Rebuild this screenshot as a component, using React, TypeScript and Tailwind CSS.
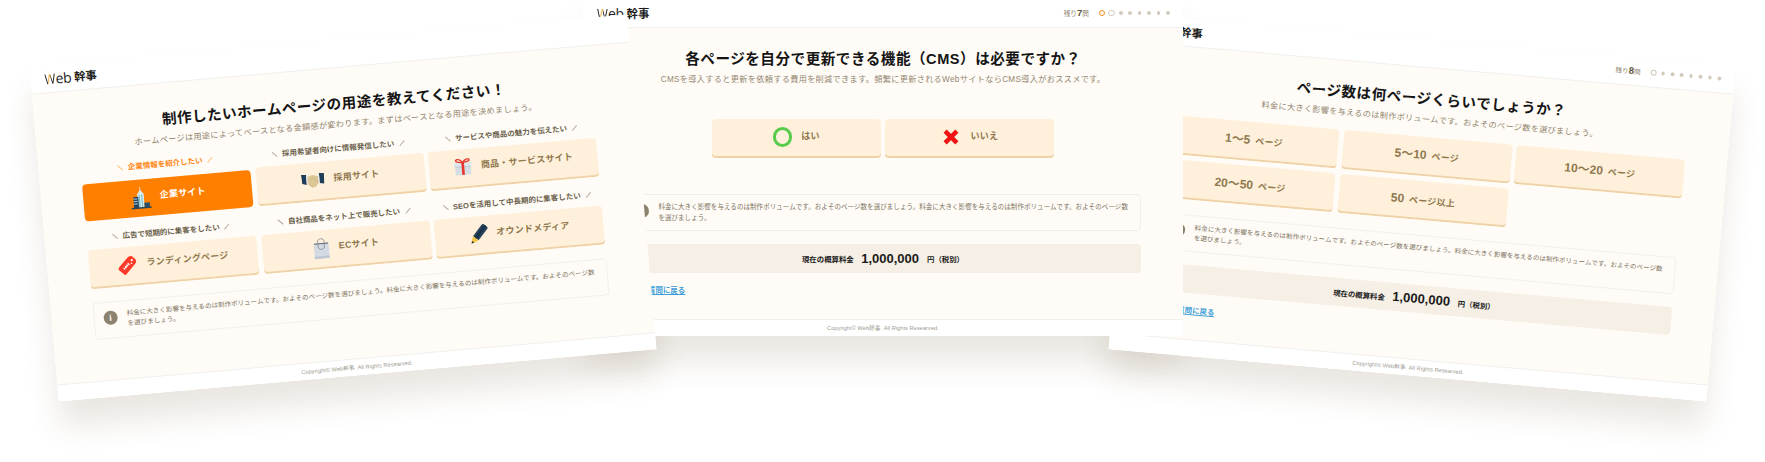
import type { ReactNode } from "react";

const NOTE =
  "料金に大きく影響を与えるのは制作ボリュームです。およそのページ数を選びましょう。料金に大きく影響を与えるのは制作ボリュームです。およそのページ数を選びましょう。";

function Logo() {
  return (
    <div className="mt-[2px] flex items-center text-[#1c1c1c]">
      <div className="flex h-[14px] w-[29.5px] items-center font-['Open_Sans'] text-[14px] font-normal leading-[14px] tracking-[-0.4px]">
        <span className="-mr-[2.4px] inline-block w-[13.4px] origin-left scale-x-[0.84] bg-[linear-gradient(90deg,#1c1c1c_0_30%,#f0a32c_30%_52%,#1c1c1c_52%)] bg-clip-text text-transparent">
          W
        </span>
        <span className="inline-block origin-left">eb</span>
      </div>
      <div className="relative text-[11.4px] font-bold leading-[14px]">
        幹事
        <span className="absolute left-[2px] top-[6px] size-[2px] rounded-full bg-[#f0a32c]" />
      </div>
    </div>
  );
}

function Progress({ left, rings }: { left: number; rings: string[] }) {
  return (
    <div className="flex items-center">
      <div className="mr-[8.5px] flex items-baseline text-[6.6px] leading-[10px] text-[#8f8370]">
        残り<span className="text-[9.5px] font-bold text-[#5c503a]">{left}</span>問
      </div>
      <div className="flex items-center">
        {Array.from({ length: 8 }, (_, i) => (
          <span key={i} className="flex w-[9.4px] justify-center">
            {i < rings.length ? (
              <span className={`size-[6.4px] rounded-full ${rings[i]}`} />
            ) : (
              <span className="size-[3.6px] rounded-full bg-[#d3cabc]" />
            )}
          </span>
        ))}
      </div>
    </div>
  );
}

function Heading({ title, sub, className }: { title: string; sub: string; className: string }) {
  return (
    <div className={`flex flex-col items-center whitespace-nowrap ${className}`}>
      <h1 className="text-[14.6px] font-bold leading-[16px] tracking-[0.5px] text-[#151515]">{title}</h1>
      <p className="mt-[6.5px] text-[8.2px] leading-[12px] tracking-[0.3px] text-[#938670]">{sub}</p>
    </div>
  );
}

function Choice({ icon, children, active = false }: { icon?: ReactNode; children: ReactNode; active?: boolean }) {
  return (
    <button
      className={
        active
          ? "mt-[2px] flex h-[37px] w-[169px] items-center justify-center gap-[9px] rounded-[4px] bg-[#ff8000] text-[9px] font-bold tracking-[0.25px] text-white"
          : "flex h-[39px] w-[169px] items-center justify-center gap-[9px] rounded-[4px] bg-[#fff0db] pb-[2px] text-[9px] font-bold tracking-[0.25px] text-[#8f784e] shadow-[inset_0_-2px_0_#efd3a8]"
      }
    >
      {icon}
      <span className="whitespace-nowrap">{children}</span>
    </button>
  );
}

function Purpose({ label, icon, text, active = false }: { label: string; icon: ReactNode; text: string; active?: boolean }) {
  return (
    <div className="flex flex-col">
      <div className={`mb-[3.5px] flex h-[15.5px] items-center justify-center gap-[7px] whitespace-nowrap text-[7.5px] font-bold leading-[9px] ${active ? "text-[#ff8410]" : "text-[#6a5f4b]"}`}>
        <span className="h-[7px] w-px -rotate-45 bg-current opacity-50" />
        {label}
        <span className="h-[7px] w-px rotate-45 bg-current opacity-50" />
      </div>
      <Choice icon={icon} active={active}>
        {text}
      </Choice>
    </div>
  );
}

function Note() {
  return (
    <div className="flex h-[37px] w-[515.6px] rounded-[4px] border border-[#f3f0ea] pl-[8.7px] pt-[7.5px]">
      <span className="mt-[1px] flex size-[14px] shrink-0 items-center justify-center rounded-full bg-[#8c826e] font-['Liberation_Serif'] text-[9px] font-bold leading-none text-white">
        i
      </span>
      <p className="-mt-[0.5px] ml-[9.5px] w-[474px] text-[6.5px] leading-[10.6px] tracking-[0.06px] text-[#7d725e]">{NOTE}</p>
    </div>
  );
}

function Price() {
  return (
    <>
      <div className="mt-[13.4px] flex h-[28.3px] w-[515.6px] items-center justify-center rounded-[4px] bg-[#f5efe5] text-[#1b1b1b]">
        <span className="mt-[3px] text-[7.4px] font-bold">現在の概算料金</span>
        <span className="ml-[7.5px] text-[13px] font-bold">1,000,000</span>
        <span className="ml-[8px] mt-[3px] text-[7.4px] font-bold">円（税別）</span>
      </div>
      <a className="ml-[8px] mt-[12.3px] self-start text-[7.45px] font-bold leading-[11px] text-[#3f9fd8] underline">前の質問に戻る</a>
    </>
  );
}

function Screen({ place, header, children }: { place: string; header?: ReactNode; children: ReactNode }) {
  return (
    <section className={`absolute flex h-[336px] w-[600px] flex-col overflow-hidden bg-[#fffcf7] ${place}`}>
      <header className="flex h-[27.5px] shrink-0 items-center justify-between border-b border-[#f1efec] bg-white pl-[14px] pr-[10.6px]">
        <Logo />
        {header}
      </header>
      <main className="flex flex-1 flex-col px-[42.2px]">{children}</main>
      <footer className="flex h-[17px] shrink-0 items-center justify-center border-t border-[#f1efec] bg-white text-[5.6px] tracking-[0.07px] text-[#a09a90]">
        Copyright© Web幹事. All Rights Researved.
      </footer>
    </section>
  );
}

const Building = () => (
  <svg viewBox="0 0 21 23" className="h-[23px] w-[21px]">
    <path d="M10.2 0v5" stroke="#e9eef0" strokeWidth=".7" />
    <path d="M7 7.5 10.3 3l3.3 4.500V21H7z" fill="#d9edf0" />
    <path d="M8.500 8h1.200v13H8.500zM11 8h1.200v13H11z" fill="#7fc0cc" />
    <path d="M3 10h5v11H3z" fill="#1f4561" />
    <path d="M3 12h4M3 14.500h4M3 17h4" stroke="#dbe6ea" strokeWidth=".8" />
    <path d="M13.500 16.500H19V21h-5.500z" fill="#2b4f68" />
    <path d="M.5 20.700h20v1.500H.5z" fill="#2d4656" />
  </svg>
);

const Handshake = () => (
  <svg viewBox="0 0 23 18" className="h-[18px] w-[23px]">
    <path d="M0 2.500 5 3v10l-4.500-1.500z" fill="#1e3d59" />
    <path d="M23 2.500 18 2v10l4.500 1z" fill="#1e3d59" />
    <path d="M5 3.500h1.200v9L5 13zM18 3.200h-1.200v9l1.200.3z" fill="#e8edf0" />
    <path d="M6.200 5 11 3.500 16.800 5v7l-3 3.500-3.300.5-4.300-3.500z" fill="#dcc896" />
    <path d="m9 8 3-2 4.500 5M8 13l2.500 2.500" stroke="#c9b27b" strokeWidth=".8" fill="none" />
  </svg>
);

const Gift = () => (
  <svg viewBox="0 0 18 18" className="h-[18px] w-[18px]">
    <path d="M1.200 7h15.600v9.500H1.200z" fill="#d5dde5" />
    <path d="M0 4h18v4H0z" fill="#dfe6ec" />
    <path d="M1.200 8h15.600v.8H1.200z" fill="#bcc7d2" />
    <path d="M7.800 4h2.600v12.500H7.800z" fill="#e8382d" />
    <path d="M9 4C6.500.5 3 .2 2.300 1.500S4.500 4 9 4c4.500 0 7.400-1.200 6.700-2.500S11.500.5 9 4z" fill="none" stroke="#e8382d" strokeWidth="1.300" />
  </svg>
);

const Tag = () => (
  <svg viewBox="0 0 20 20" className="h-[20px] w-[19px]">
    <g transform="rotate(45 10 10)">
      <path d="M7.500 0h5Q15.300 1 15.300 4v14.500q0 1.500-1.500 1.500H6.200q-1.500 0-1.500-1.500V4q0-3 2.800-4z" fill="#fb3a2a" />
      <circle cx="10" cy="3.300" r="1.200" fill="#fff" />
      <path d="M8.700 8.500h2.600M8.700 10.700h2.600M8.700 13h2.600M8.700 15.300h2.600" stroke="#fff" strokeWidth="1.300" />
      <path d="M10 8.500v7" stroke="#fff" strokeWidth=".8" />
      <circle cx="12" cy="6" r=".8" fill="#fff" />
    </g>
  </svg>
);

const Bag = () => (
  <svg viewBox="0 0 16 21" className="h-[21px] w-[16px]">
    <path d="M.5 5h15v15.500H.5z" fill="#d3dae2" />
    <path d="M.5 18h15v2.500H.5z" fill="#bfc8d1" />
    <path d="M1 5h14v1H1z" fill="#59636b" />
    <path d="M4.800 8V3.500C4.800-.3 11.200-.3 11.200 3.500V8c0 4.500-6.400 4.500-6.400 0z" fill="none" stroke="#8a9299" strokeWidth=".9" />
  </svg>
);

const Pencil = () => (
  <svg viewBox="0 0 18 20" className="h-[20px] w-[18px] overflow-visible">
    <g transform="rotate(42 9 10)">
      <path d="M5.500.5q0-1.500 1.500-1.500h4q1.500 0 1.500 1.500V15h-7z" fill="#24425c" />
      <path d="M7.600-1h2.600v16H7.600z" fill="#1a3347" />
      <path d="M5.500 15h7L10.200 20H7.800z" fill="#f6c445" />
      <path d="M7.600 19.400h2.800L9 22z" fill="#2b2b2b" />
    </g>
  </svg>
);

const Yes = () => <span className="size-[19.6px] rounded-full border-[3.2px] border-[#57cb4a]" />;

const No = () => (
  <svg viewBox="0 0 20 20" className="h-[20px] w-[20px]">
    <path d="M4.100 4.100 15.900 15.900M15.900 4.100 4.100 15.900" stroke="#f01414" strokeWidth="4.400" />
  </svg>
);

function Pages({ range, unit = "ページ" }: { range: string; unit?: string }) {
  return (
    <Choice>
      <span className="text-[12px] tracking-normal">{range}</span>
      <span className="ml-[5px]">{unit}</span>
    </Choice>
  );
}

const LEFT = "left-[43.2px] top-[40.2px] -rotate-5";
const CENTER = "left-[583px] top-0";
const RIGHT = "left-[1121.9px] top-[40.2px] rotate-5";
const SHADOW = "absolute h-[336px] w-[600px] shadow-[0_25px_30px_rgba(90,70,30,0.13)]";

export default function App() {
  return (
    <div className="relative h-[462px] w-[1765px] overflow-hidden bg-white font-['Liberation_Sans','Noto_Sans_CJK_JP',sans-serif]">
      <div className={`${SHADOW} ${RIGHT}`} />
      <div className={`${SHADOW} ${CENTER}`} />
      <div className={`${SHADOW} ${LEFT}`} />

      <Screen place={RIGHT} header={<Progress left={8} rings={["border-[1.3px] border-[#d3cabc]"]} />}>
        <Heading
          className="mt-[23.5px]"
          title="ページ数は何ページくらいでしょうか？"
          sub="料金に大きく影響を与えるのは制作ボリュームです。およそのページ数を選びましょう。"
        />
        <div className="mb-[14.5px] mt-[11px] grid grid-cols-[repeat(3,169px)] gap-x-[4.6px] gap-y-[5.5px]">
          <Pages range="1〜5" />
          <Pages range="5〜10" />
          <Pages range="10〜20" />
          <Pages range="20〜50" />
          <Pages range="50" unit="ページ以上" />
        </div>
        <Note />
        <Price />
      </Screen>

      <Screen
        place={CENTER}
        header={<Progress left={7} rings={["border-[1.8px] border-[#f98a1c]", "border-[1.3px] border-[#d3cabc]"]} />}
      >
        <Heading
          className="mt-[23.5px]"
          title="各ページを自分で更新できる機能（CMS）は必要ですか？"
          sub="CMSを導入すると更新を依頼する費用を削減できます。頻繁に更新されるWebサイトならCMS導入がおススメです。"
        />
        <div className="mb-[36.5px] mt-[33px] flex justify-center gap-[4.6px]">
          <Choice icon={<Yes />}>はい</Choice>
          <Choice icon={<No />}>いいえ</Choice>
        </div>
        <Note />
        <Price />
      </Screen>

      <Screen place={LEFT}>
        <Heading
          className="mt-[28.5px]"
          title="制作したいホームページの用途を教えてください！"
          sub="ホームページは用途によってベースとなる金額感が変わります。まずはベースとなる用途を決めましょう。"
        />
        <div className="mb-[14px] mt-[10px] grid grid-cols-[repeat(3,169px)] gap-x-[4.6px] gap-y-[10px]">
          <Purpose active label="企業情報を紹介したい" icon={<Building />} text="企業サイト" />
          <Purpose label="採用希望者向けに情報発信したい" icon={<Handshake />} text="採用サイト" />
          <Purpose label="サービスや商品の魅力を伝えたい" icon={<Gift />} text="商品・サービスサイト" />
          <Purpose label="広告で短期的に集客をしたい" icon={<Tag />} text="ランディングページ" />
          <Purpose label="自社商品をネット上で販売したい" icon={<Bag />} text="ECサイト" />
          <Purpose label="SEOを活用して中長期的に集客したい" icon={<Pencil />} text="オウンドメディア" />
        </div>
        <Note />
      </Screen>
    </div>
  );
}
